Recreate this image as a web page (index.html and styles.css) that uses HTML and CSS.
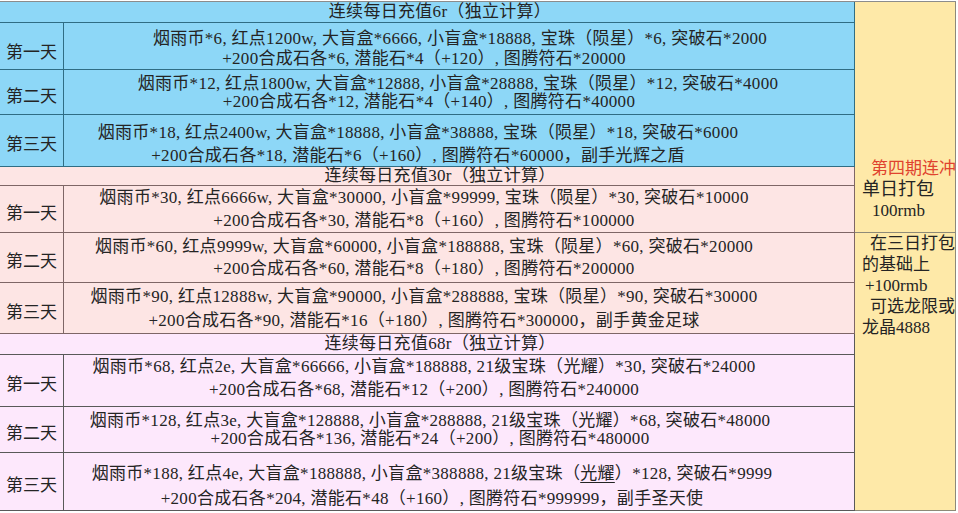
FILE: index.html
```html
<!DOCTYPE html>
<html lang="zh">
<head>
<meta charset="utf-8">
<title>连续每日充值</title>
<link rel="stylesheet" href="styles.css">
</head>
<body>
<div class="sheet">
  <div class="hdr blue">连续每日充值6r（独立计算）</div>
  <div class="side side-top">
    <div class="ln red i17">第四期连冲</div>
    <div class="ln big i8">单日打包</div>
    <div class="ln i18">100rmb</div>
  </div>

  <div class="day blue d-low">第一天</div>
  <div class="desc blue lh20 dn3">
    <div class="ln s36">烟雨币*6, 红点1200w, 大盲盒*6666, 小盲盒*18888, 宝珠（陨星）*6, 突破石*2000</div>
    <div class="ln">+200合成石各*6, 潜能石*4（+120）, 图腾符石*20000</div>
  </div>
  <div class="day blue">第二天</div>
  <div class="desc blue lh18 dn1">
    <div class="ln s34">烟雨币*12, 红点1800w, 大盲盒*12888, 小盲盒*28888, 宝珠（陨星）*12, 突破石*4000</div>
    <div class="ln s5">+200合成石各*12, 潜能石*4（+140）, 图腾符石*40000</div>
  </div>
  <div class="day blue">第三天</div>
  <div class="desc blue lh23 dn3">
    <div class="ln sm6">烟雨币*18, 红点2400w, 大盲盒*18888, 小盲盒*38888, 宝珠（陨星）*18, 突破石*6000</div>
    <div class="ln sm6">+200合成石各*18, 潜能石*6（+160）, 图腾符石*60000，副手光辉之盾</div>
  </div>

  <div class="hdr pink">连续每日充值30r（独立计算）</div>
  <div class="day pink">第一天</div>
  <div class="desc pink lh23">
    <div class="ln">烟雨币*30, 红点6666w, 大盲盒*30000, 小盲盒*99999, 宝珠（陨星）*30, 突破石*10000</div>
    <div class="ln">+200合成石各*30, 潜能石*8（+160）, 图腾符石*100000</div>
  </div>

  <div class="side side-bot">
    <div class="ln i16">在三日打包</div>
    <div class="ln i8">的基础上</div>
    <div class="ln i11">+100rmb</div>
    <div class="ln i16">可选龙限或</div>
    <div class="ln i8">龙晶4888</div>
  </div>

  <div class="day pink">第二天</div>
  <div class="desc pink lh22">
    <div class="ln">烟雨币*60, 红点9999w, 大盲盒*60000, 小盲盒*188888, 宝珠（陨星）*60, 突破石*20000</div>
    <div class="ln">+200合成石各*60, 潜能石*8（+180）, 图腾符石*200000</div>
  </div>
  <div class="day pink">第三天</div>
  <div class="desc pink lh24 dn1">
    <div class="ln">烟雨币*90, 红点12888w, 大盲盒*90000, 小盲盒*288888, 宝珠（陨星）*90, 突破石*30000</div>
    <div class="ln">+200合成石各*90, 潜能石*16（+180）, 图腾符石*300000，副手黄金足球</div>
  </div>

  <div class="hdr lav">连续每日充值68r（独立计算）</div>
  <div class="day lav">第一天</div>
  <div class="desc lav lh23 up3">
    <div class="ln">烟雨币*68, 红点2e, 大盲盒*66666, 小盲盒*188888, 21级宝珠（光耀）*30, 突破石*24000</div>
    <div class="ln">+200合成石各*68, 潜能石*12（+200）, 图腾符石*240000</div>
  </div>
  <div class="day lav">第二天</div>
  <div class="desc lav lh18">
    <div class="ln s6">烟雨币*128, 红点3e, 大盲盒*128888, 小盲盒*288888, 21级宝珠（光耀）*68, 突破石*48000</div>
    <div class="ln s6">+200合成石各*136, 潜能石*24（+200）, 图腾符石*480000</div>
  </div>
  <div class="day lav">第三天</div>
  <div class="desc lav lh25 dn4">
    <div class="ln s8">烟雨币*188, 红点4e, 大盲盒*188888, 小盲盒*388888, 21级宝珠（<span class="ul">光耀</span>）*128, 突破石*9999</div>
    <div class="ln s8">+200合成石各*204, 潜能石*48（+160）, 图腾符石*999999，副手圣天使</div>
  </div>
</div>
</body>
</html>
```

FILE: styles.css
```css
html, body {
  margin: 0;
  padding: 0;
  background: #ffffff;
}
body {
  padding-top: 1px;
  font-family: "Liberation Serif", "Noto Sans CJK SC", serif;
  font-size: 17px;
  color: #242424;
}
.sheet {
  display: grid;
  grid-template-columns: 64px 791px 101px;
  grid-template-rows: 21px 47px 45px 52px 19px 47px 50px 51px 21px 52px 46px 58px;
  border-top: 1px solid #8c8c8c;
  width: 956px;
}
.sheet > div {
  box-sizing: border-box;
  border-right: 1px solid #555;
  border-bottom: 1px solid #555;
  overflow: visible;
  white-space: nowrap;
}
.blue { background: #8dd7f7; border-color: #2f6d84 !important; }
.pink { background: #fde5e4; border-color: #7e6666 !important; }
.lav  { background: #fde8fc; border-color: #595959 !important; }

.hdr {
  grid-column: 1 / 3;
  display: flex;
  align-items: center;
  justify-content: center;
  padding-left: 26px;
  line-height: 18px;
  letter-spacing: 0.3px;
}
.day {
  display: flex;
  align-items: center;
  justify-content: center;
  padding-top: 4px;
}
.d-low { padding-top: 8px; }
.desc {
  display: flex;
  flex-direction: column;
  justify-content: center;
  text-align: center;
  padding-right: 70px;
  letter-spacing: 0.3px;
}
.ln { display: block; }

.lh18 { line-height: 18px; }
.lh20 { line-height: 20px; }
.lh22 { line-height: 22px; }
.lh23 { line-height: 23px; }
.lh24 { line-height: 24px; }
.lh25 { line-height: 25px; }
.dn1 { padding-top: 2px; }
.dn3 { padding-top: 6px; }
.dn4 { padding-top: 8px; }
.up3 { padding-bottom: 6px; }

.s36 { padding-left: 72px; }
.s34 { padding-left: 68px; }
.s5 { padding-left: 10px; }
.s6 { padding-left: 12px; }
.s8 { padding-left: 16px; }
.sm6 { padding-right: 12px; }

.ul { text-decoration: underline; text-underline-offset: 3px; }

.side {
  grid-column: 3;
  background: #fee9a8;
  border-color: #8e8a78 !important;
  display: flex;
  flex-direction: column;
  line-height: 21px;
}
.side-top {
  grid-row: 1 / 7;
  justify-content: flex-end;
  padding-bottom: 11px;
}
.side-bot {
  grid-row: 7 / 13;
  justify-content: flex-start;
}
.red { color: #e0432e; }
.big { font-size: 18px; }
.i8 { padding-left: 7px; }
.i11 { padding-left: 10px; }
.i16 { padding-left: 15px; }
.i17 { padding-left: 16px; }
.i18 { padding-left: 17px; }
```
